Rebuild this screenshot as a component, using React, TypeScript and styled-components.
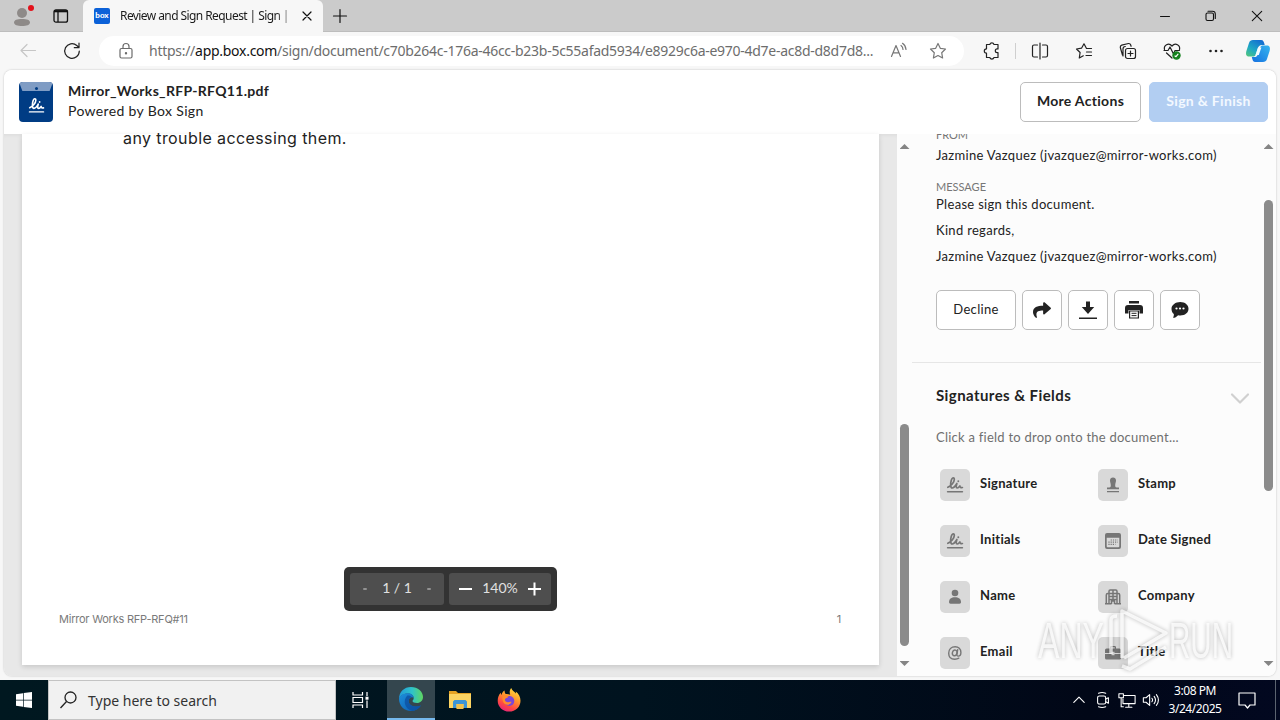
import React from "react";
import styled, { createGlobalStyle } from "styled-components";
import { FaShare } from "react-icons/fa";

const GlobalStyle = createGlobalStyle`
  * { box-sizing: border-box; }
  body { margin: 0; overflow: hidden; background: #f7f7f7; }
  h2, p { margin: 0; font-weight: 400; }
  button { padding: 0; margin: 0; font-family: inherit; }
  svg { display: block; flex: none; }
`;

type IconProps = { size?: number; color?: string; width?: number; children: React.ReactNode };

const Line = ({ size = 20, color = "#222", width = 1.2, children }: IconProps) => (
  <svg width={size} height={size} viewBox="0 0 20 20" fill="none" stroke={color} strokeWidth={width} strokeLinecap="round" strokeLinejoin="round">
    {children}
  </svg>
);

/* ---------------- browser icons ---------------- */

const ProfileIcon = () => (
  <svg width="24" height="24" viewBox="0 0 24 24">
    <circle cx="10" cy="9" r="5" fill="#8e8a88" />
    <path d="M2 18.500C2 16 5 15 10 15s8 1 8 3.500C18 21 14.500 22 10 22s-8-1-8-3.500z" fill="#8e8a88" />
    <circle cx="19" cy="4" r="3" fill="#e3121b" />
  </svg>
);

const CopilotIcon = () => (
  <svg width="26" height="24" viewBox="0 0 26 24">
    <defs>
      <linearGradient id="cpA" x1="0" y1="1" x2=".7" y2="0">
        <stop offset="0" stopColor="#56c878" />
        <stop offset=".45" stopColor="#1fa9c4" />
        <stop offset="1" stopColor="#146fd1" />
      </linearGradient>
      <linearGradient id="cpB" x1="1" y1="0" x2="0" y2="1">
        <stop offset="0" stopColor="#35b5ef" />
        <stop offset="1" stopColor="#1570e0" />
      </linearGradient>
    </defs>
    <path d="M8 1h8c2.500 0 3 2 3.700 5H17c-2.500 0-3.500 1.200-4.200 3.600L11 15c-.7 2-1.500 2.500-3.500 2.500H4C1 17.500.6 15 1.400 12L4 4c.8-2.200 2-3 4-3z" fill="url(#cpA)" />
    <path d="M18 23h-7.500c-2.500 0-3-2-3.700-5H9c2.500 0 3.500-1.200 4.200-3.600L15 9c.7-2 1.500-2.500 3.500-2.500H22c3 0 3.400 2.500 2.600 5.500L22 20c-.8 2.200-2 3-4 3z" fill="url(#cpB)" />
    <path d="M13 8.500h3.400l-2.600 7.500h-3.300z" fill="#f3fbff" />
  </svg>
);

const EdgeIcon = () => (
  <svg width="26" height="26" viewBox="0 0 26 26">
    <defs>
      <linearGradient id="edT" x1="0" y1=".5" x2="1" y2=".5">
        <stop offset="0" stopColor="#2199d8" />
        <stop offset=".55" stopColor="#2fc3c9" />
        <stop offset="1" stopColor="#5fd660" />
      </linearGradient>
      <linearGradient id="edB" x1="0" y1="0" x2="1" y2="1">
        <stop offset="0" stopColor="#1d8fdb" />
        <stop offset="1" stopColor="#0b59ad" />
      </linearGradient>
    </defs>
    <path d="M1 13C1 5.800 6.200 1 13 1c7 0 12 4.800 12 10 0 3.600-2.700 6-6 6-2.700 0-4.500-1-4.500-2 0-.7 1.200-1.200 1.200-3 0-2.700-2.600-4.600-5.900-4.600C5.300 7.400 2 9.800 1 13z" fill="url(#edT)" />
    <path d="M1 12.800C2 9.500 5.500 7.300 9.700 7.300c3.300 0 6 2 6 4.700-1-1.500-5-1-5 3 0 4 4.500 7 12.300 4.500C20.800 23 17.300 25 13 25 6 25 1 19.800 1 12.800z" fill="url(#edB)" />
    <path d="M9.300 9.500C7 12 6.300 15 7 18c.9 3.800 3.500 6.200 7.500 6.900 3.500-.4 6.500-2.300 8.500-5.400-7.800 2.500-12.300-.5-12.300-4.500 0-2.500 1.600-3.700 3-3.800-.8-1.200-2.400-1.900-4.400-1.700z" fill="#0c4fa0" opacity=".75" />
  </svg>
);

const FolderIcon = () => (
  <svg width="22" height="20" viewBox="0 0 22 20">
    <path d="M0 1h7l2 2h13v4H0z" fill="#e6a323" />
    <path d="M0 4h22v14H0z" fill="#fcd462" />
    <path d="M4 18v-6.500l1.500-1.500h11l1.500 1.500V18h-3.500v-4h-7v4z" fill="#3c95d6" />
    <path d="M7.500 14h7v5h-7z" fill="#f2c14c" />
  </svg>
);

const FirefoxIcon = () => (
  <svg width="24" height="24" viewBox="0 0 24 24">
    <defs>
      <linearGradient id="ff" x1=".8" y1="0" x2=".3" y2="1">
        <stop offset="0" stopColor="#ffe23f" />
        <stop offset=".4" stopColor="#ff9a2c" />
        <stop offset=".75" stopColor="#ff4743" />
        <stop offset="1" stopColor="#e6237a" />
      </linearGradient>
    </defs>
    <path d="M14.200 0c1 2.600 3 3.400 4.600 5.400.2-.7.1-1.300-.1-1.900 3 2.200 4.800 5.500 4.800 9.200C23.500 19 18.500 23.600 12.200 23.600 5.700 23.600.7 18.700.7 12.700c0-3.300 1.200-6.200 3-8 .1 1 .4 1.600.8 2.200C5.100 4.600 6.400 3 7.600 2.500c-.1 1.300.2 2.500 1 3.500 1.900-.2 3.400.1 4.600.9-.9-2.500-.6-5 1-6.900z" fill="url(#ff)" />
    <circle cx="12.300" cy="13" r="5" fill="#7a46d8" />
    <path d="M5.500 8c2-1 4.700-.6 6 .8-1 1.200-3.200 1-3.500 2.500-.3 1.800 1 3 3 3 1.500 0 2-.8 3.500-.5-.5 2-2.400 3-4.400 3C7 16.800 4.800 13 5.500 8z" fill="#ff8c2b" />
  </svg>
);

/* looped "l" and "i" mark used by the logo and both signing fields */
const Scribble = ({ size, color }: { size: number; color: string }) => (
  <svg width={size} height={size} viewBox="0 0 18 18" fill="none" stroke={color} strokeLinecap="round" strokeLinejoin="round">
    <path d="M1.800 11.300C5 10 8.300 6.300 8.300 3.500 8.300 1 6.100 1.300 5.300 4.200 4.500 7 4 12 6.300 12c1.800 0 3.200-2.200 4.600-4.500-.9 2.700-1 4.500.3 4.500 1.300 0 2-1 2.700-2 .2 1.500 1 1.800 2.500 1.500" strokeWidth="1.700" />
    <path d="M12.300 5.200v.1" strokeWidth="1.900" />
    <path d="M1.500 15.800h15" strokeWidth="1.400" />
  </svg>
);

/* ---------------- field icons ---------------- */

const G = "#767676";

const fieldIcons: Record<string, React.ReactNode> = {
  Signature: <Scribble size={18} color={G} />,
  Initials: <Scribble size={18} color={G} />,
  Stamp: (
    <svg width="14" height="16" viewBox="0 0 14 16" fill={G}>
      <path d="M4 3.500C4 1.500 5.200.5 7 .5s3 1 3 3C10 5.500 9.200 6 9.200 8.500c0 1.300.4 2 1.500 2H13v1.800H1v-1.800h2.300c1.100 0 1.500-.7 1.500-2C4.800 6 4 5.500 4 3.500zM1 14h12v1.200H1z" />
    </svg>
  ),
  "Date Signed": (
    <svg width="16" height="16" viewBox="0 0 16 16">
      <path fill={G} fillRule="evenodd" d="M2 0h12a2 2 0 0 1 2 2v12a2 2 0 0 1-2 2H2a2 2 0 0 1-2-2V2a2 2 0 0 1 2-2zm-.3 4.800v8.400q0 1.100 1.100 1.100h10.400q1.100 0 1.100-1.100V4.800z" />
      <path stroke={G} strokeWidth="1.200" strokeDasharray="1.200 1" d="M5.700 7h7M3.400 9.200h9.300M3.400 11.400h7" />
    </svg>
  ),
  Name: (
    <svg width="14" height="16" viewBox="0 0 14 16" fill={G}>
      <circle cx="7" cy="4" r="3.300" />
      <path d="M1 13c0-3.200 2.400-4.800 6-4.800s6 1.600 6 4.800c0 1-.5 1.700-1.500 1.700h-9C1.500 14.700 1 14 1 13z" />
    </svg>
  ),
  Company: (
    <svg width="16" height="16" viewBox="0 0 16 16" fill="none" stroke={G} strokeWidth="1.500">
      <path d="M4 15V2.200Q4 1 5.200 1h5.600Q12 1 12 2.200V15M3.500 4.500H2.800Q1.300 4.500 1.300 6v9M12.500 4.500h.7q1.500 0 1.500 1.500v9M0 14.700h6.500M9.500 14.700H16M6.500 15v-3h3v3M4 4.500h8M4 7.500h8M4 10.500h8M8 1v9.500" />
    </svg>
  ),
  Email: (
    <svg width="16" height="16" viewBox="0 0 16 16" fill="none" stroke={G} strokeWidth="1.400" strokeLinecap="round">
      <path d="M10.700 4.700l-.8 4.600c-.2 1.200.4 1.800 1.300 1.800 1.600 0 2.700-1.600 2.700-3.600C13.900 4 11.500 1.800 8.200 1.800 4.400 1.800 1.700 4.500 1.700 8.200c0 3.700 2.500 6 6.100 6 1.600 0 2.900-.3 4-1" />
      <ellipse cx="7.700" cy="7.900" rx="2.300" ry="2.900" transform="rotate(15 7.700 7.900)" />
    </svg>
  ),
  Title: (
    <svg width="16" height="14" viewBox="0 0 16 14" fill={G}>
      <path d="M5 2.500V1.300Q5 0 6.300 0h3.400Q11 0 11 1.300v1.200h3.500q1.500 0 1.500 1.500v3H9.500V5.800h-3V7H0V4q0-1.500 1.500-1.500zM6.300 2.500h3.400V1.200H6.300zM0 8h6.500v1.200h3V8H16v4q0 1.500-1.500 1.500h-13Q0 13.500 0 12z" />
    </svg>
  ),
};

const fields = ["Signature", "Stamp", "Initials", "Date Signed", "Name", "Company", "Email", "Title"];

/* ---------------- browser chrome ---------------- */

const Desktop = styled.div`
  display: flex;
  flex-direction: column;
  width: 1280px;
  height: 720px;
  position: relative;
  overflow: hidden;
  font-family: "Lato", sans-serif;
  color: #222;
`;

const TabStrip = styled.div`
  display: flex;
  height: 32px;
  background: #cbcbcb;
  border-bottom: 1px solid #bdbdbd;
`;

const StripCell = styled.div<{ $w: number }>`
  width: ${(p) => p.$w}px;
  height: 32px;
  display: flex;
  align-items: center;
  justify-content: center;
`;

const Tab = styled.div`
  width: 240px;
  height: 32px;
  display: flex;
  align-items: center;
  padding-left: 11px;
  background: #f7f7f7;
  border-radius: 6px 6px 0 0;
`;

const Favicon = styled.div`
  width: 16px;
  height: 16px;
  border-radius: 2px;
  background: #0b61d8;
  color: #fff;
  font: 900 8px/14px "Lato", sans-serif;
  text-align: center;
`;

const TabTitle = styled.div`
  width: 172px;
  margin-left: 10px;
  white-space: nowrap;
  font: 12px/20px "Noto Sans", sans-serif;
  letter-spacing: -0.58px;
  color: #1b1b1b;
  mask-image: linear-gradient(90deg, #000 155px, rgba(0, 0, 0, 0.35) 172px);
`;

const TabClose = styled.div`
  width: 20px;
  margin-left: 5px;
  display: flex;
  justify-content: center;
`;

const Spacer = styled.div`
  flex: 1;
`;

const Toolbar = styled.div`
  display: flex;
  align-items: center;
  height: 38px;
  padding: 0 2px 0 6px;
  background: #f7f7f7;
`;

const ToolCell = styled.div<{ $w?: number }>`
  flex: none;
  width: ${(p) => p.$w ?? 44}px;
  height: 30px;
  display: flex;
  align-items: center;
  justify-content: center;
`;

const AddressBar = styled.div`
  display: flex;
  align-items: center;
  flex: none;
  width: 865px;
  height: 30px;
  margin: 0 5px;
  padding: 0 16px 0 17px;
  background: #fff;
  border-radius: 15px;
`;

const Url = styled.div`
  width: 740px;
  flex: none;
  margin-left: 13px;
  white-space: nowrap;
  font: 14px/20px "Noto Sans", sans-serif;
  letter-spacing: -0.275px;
  color: #6d6d6d;

  b {
    font-weight: 400;
    color: #111;
  }
`;

const Separator = styled.div`
  width: 1px;
  height: 16px;
  margin: 0 2px 0 1px;
  background: #cfcfcf;
`;

/* ---------------- page ---------------- */

const Page = styled.div`
  display: flex;
  flex-direction: column;
  width: 1272px;
  height: 606px;
  margin: 0 4px;
  border-radius: 8px;
  overflow: hidden;
  background: #fcfcfc;
  box-shadow: 0 0 2px rgba(0, 0, 0, 0.25);
`;

const Header = styled.header`
  display: flex;
  align-items: center;
  height: 64px;
  padding: 0 8px 0 15px;
  background: #fff;
  flex: none;
`;

const Logo = styled.div`
  width: 34px;
  height: 40px;
  border-radius: 4px;
  overflow: hidden;
  background: #003c84;
`;

const LogoFlap = styled.div`
  width: 34px;
  height: 9px;
  padding-top: 5px;
  background: #7f9cc4;
  clip-path: polygon(0 0, 100% 0, 90% 100%, 10% 100%);

  &::after {
    content: "";
    display: block;
    width: 3px;
    height: 3px;
    margin: 0 auto;
    border-radius: 50%;
    background: #003c84;
  }
`;

const LogoMark = styled.div`
  display: flex;
  justify-content: center;
  padding-top: 6px;
`;

const DocTitle = styled.div`
  flex: 1;
  margin-left: 15px;
  padding-bottom: 2px;
  font-size: 14px;
  line-height: 20px;
  letter-spacing: 0.35px;

  b {
    display: block;
    font-weight: 700;
    letter-spacing: 0.3px;
  }
`;

const Button = styled.button<{ $w: number; $primary?: boolean; $bold?: boolean }>`
  display: flex;
  align-items: center;
  justify-content: center;
  width: ${(p) => p.$w}px;
  height: 40px;
  border: 1px solid ${(p) => (p.$primary ? "#b2cef2" : "#bcbcbc")};
  border-radius: 5px;
  background: ${(p) => (p.$primary ? "#b2cef2" : "#fff")};
  color: ${(p) => (p.$primary ? "#f3f8ff" : "#222")};
  font-size: ${(p) => (p.$bold ? 14 : 13)}px;
  font-weight: ${(p) => (p.$bold ? 700 : 400)};
  letter-spacing: 0.3px;

  span {
    padding-bottom: 3px;
  }
`;

const HeaderButtons = styled.div`
  display: flex;
  gap: 8px;
`;

const Body = styled.div`
  display: flex;
  height: 542px;
`;

const DocPane = styled.div`
  width: 893px;
  padding: 0 18px 11px;
  background: #e8e8e8;
  box-shadow: inset 0 4px 4px -3px rgba(0, 0, 0, 0.06);
`;

const Sheet = styled.div`
  display: flex;
  flex-direction: column;
  justify-content: space-between;
  height: 531px;
  padding: 0 38px 36px 37px;
  background: #fff;
  box-shadow: 0 2px 5px rgba(0, 0, 0, 0.14);
`;

const DocText = styled.p`
  margin: -7px 0 0 64px;
  font: 16px/22px "Inter", sans-serif;
  letter-spacing: 0.4px;
  color: #222;
`;

const DocFooter = styled.div`
  display: flex;
  justify-content: space-between;
  font: 11px/20px "Inter", sans-serif;
  letter-spacing: -0.22px;
  color: #7a7a7a;
`;

const ScrollTrack = styled.div`
  display: flex;
  flex-direction: column;
  align-items: center;
  width: 15px;
  height: 542px;
  padding: 10px 0 10px;
  background: #fcfcfc;
`;

const Arrow = styled.div<{ $down?: boolean }>`
  width: 10px;
  height: 5px;
  background: #858585;
  clip-path: ${(p) => (p.$down ? "polygon(0 0, 100% 0, 50% 100%)" : "polygon(0 100%, 100% 100%, 50% 0)")};
`;

const Thumb = styled.div<{ $top: number; $h: number }>`
  width: 9px;
  height: ${(p) => p.$h}px;
  margin: ${(p) => p.$top}px 0 auto;
  border-radius: 5px;
  background: #8b8b8b;
`;

const Sidebar = styled.aside`
  width: 349px;
  height: 542px;
  overflow: hidden;
  background: #fcfcfc;
`;

const Details = styled.section`
  height: 235px;
  margin-top: -6px;
  padding-left: 24px;
  font-size: 13px;
  line-height: 20px;
  letter-spacing: 0.31px;
  border-bottom: 1px solid #e6e6e6;
`;

const Caption = styled.div<{ $mt?: number }>`
  margin-top: ${(p) => p.$mt ?? 0}px;
  font-size: 11px;
  line-height: 14px;
  letter-spacing: 0;
  color: #767676;
`;

const Para = styled.p<{ $mt?: number }>`
  margin-top: ${(p) => p.$mt ?? 0}px;
`;

const Actions = styled.div`
  display: flex;
  gap: 6px;
  margin-top: 24px;
`;

const FieldsHead = styled.div`
  display: flex;
  align-items: center;
  justify-content: space-between;
  margin-top: 21px;
  padding: 0 11px 0 24px;

  h2 {
    padding-bottom: 2px;
    font-size: 15px;
    line-height: 22px;
    font-weight: 700;
    letter-spacing: 0.42px;
  }
`;

const Hint = styled.p`
  margin: 19px 0 0 24px;
  font-size: 13px;
  line-height: 20px;
  letter-spacing: 0.24px;
  color: #6f6f6f;
`;

const FieldGrid = styled.div`
  display: grid;
  grid-template-columns: 158px 158px;
  row-gap: 24px;
  margin: 22px 0 0 28px;
`;

const Field = styled.div`
  display: flex;
  gap: 10px;
  height: 32px;
  font-size: 13px;
  font-weight: 700;
  line-height: 29px;
  letter-spacing: 0.29px;
`;

const FieldIcon = styled.div`
  display: flex;
  align-items: center;
  justify-content: center;
  width: 30px;
  height: 32px;
  border-radius: 5px;
  background: #d9d9d9;
`;

/* ---------------- overlays ---------------- */

const Controls = styled.div`
  position: absolute;
  left: 344px;
  top: 567px;
  display: flex;
  gap: 5px;
  width: 213px;
  height: 44px;
  padding: 6px;
  border-radius: 5px;
  background: #333;
`;

const ControlGroup = styled.div<{ $w: number }>`
  display: flex;
  align-items: center;
  justify-content: space-between;
  width: ${(p) => p.$w}px;
  height: 32px;
  padding: 0 10px;
  border-radius: 3px;
  background: #4e4e4e;
  color: #e0e0e0;
  font-size: 14px;
  line-height: 28px;

  span {
    padding-bottom: 3px;
  }
`;

const Dot = styled.i`
  width: 4px;
  height: 2px;
  margin: 0 3px;
  border-radius: 1px;
  background: #929292;
`;

const Watermark = styled.div`
  position: absolute;
  left: 1034px;
  top: 606px;
  filter: drop-shadow(0 0 2px rgba(0, 0, 0, 0.38));
  opacity: 0.85;

  svg {
    overflow: visible;
  }
`;

/* ---------------- taskbar ---------------- */

const Taskbar = styled.div`
  display: flex;
  height: 40px;
  margin-top: 4px;
  background: linear-gradient(90deg, #001820 0%, #00131f 50%, #010717 85%, #020820 100%);
`;

const TaskCell = styled.div<{ $w: number; $active?: boolean }>`
  display: flex;
  align-items: center;
  justify-content: center;
  width: ${(p) => p.$w}px;
  height: 40px;
  background: ${(p) => (p.$active ? "#34464e" : "transparent")};
  border-bottom: ${(p) => (p.$active ? "2px solid #76b9ed" : "0")};
`;

const Search = styled.div`
  display: flex;
  align-items: center;
  width: 288px;
  padding-left: 11px;
  gap: 11px;
  background: #f1f1f1;
  border: 1px solid #c3c3c3;
  font: 14px/20px "Noto Sans", sans-serif;
  color: #333;

  span {
    padding-top: 1px;
  }
`;

const Clock = styled.div`
  width: 60px;
  text-align: center;
  font: 12px/18px "Noto Sans", sans-serif;
  letter-spacing: -0.45px;
  color: #fff;
  padding-top: 2px;
`;

const ShowDesktop = styled.div`
  width: 5px;
  margin-left: 6px;
  border-left: 1px solid #5b6370;
`;

const App = () => {
  return (
    <Desktop>
      <GlobalStyle />

      <TabStrip>
        <StripCell $w={48}><ProfileIcon /></StripCell>
        <StripCell $w={25}>
          <svg width="16" height="14" viewBox="0 0 16 14" fill="none" stroke="#111" strokeWidth="1.300">
            <rect x="1" y=".8" width="13.500" height="12.400" rx="2" />
            <path d="M1 2.200h13.500" strokeWidth="2.200" />
            <path d="M5 3v10" />
          </svg>
        </StripCell>
        <StripCell $w={10} />
        <Tab>
          <Favicon>box</Favicon>
          <TabTitle>Review and Sign Request | Sign |</TabTitle>
          <TabClose>
            <Line size={16} width={1.500} color="#111"><path d="M5 5l10 10M15 5L5 15" /></Line>
          </TabClose>
        </Tab>
        <StripCell $w={34}>
          <Line size={20} width={1.200} color="#111"><path d="M10 3.500v13M3.500 10h13" /></Line>
        </StripCell>
        <Spacer />
        <StripCell $w={46}><Line size={20} width={1} color="#111"><path d="M5.500 10.500h9" /></Line></StripCell>
        <StripCell $w={46}>
          <Line size={20} width={1.100} color="#111">
            <rect x="5" y="7" width="7.500" height="7.500" rx="1.500" />
            <path d="M7 5.200h4.500q2.800 0 2.800 2.800v4.500" />
          </Line>
        </StripCell>
        <StripCell $w={46}><Line size={20} width={1.100} color="#111"><path d="M5.300 5.300l9.400 9.400M14.700 5.300l-9.400 9.400" /></Line></StripCell>
      </TabStrip>

      <Toolbar>
        <ToolCell><Line color="#c6c6c6"><path d="M17.500 9.500H3M9 3.500L3 9.500l6 6" /></Line></ToolCell>
        <ToolCell>
          <Line><path d="M17.300 10a7.300 7.300 0 1 1-2.500-5.500L17 6.500M17 2v4.700h-4.700" /></Line>
        </ToolCell>
        <AddressBar>
          <Line color="#6b6b6b">
            <rect x="4" y="7.500" width="12" height="9.500" rx="1.500" />
            <path d="M7 7.500V5.500a3 3 0 0 1 6 0v2" />
            <circle cx="10" cy="12.300" r=".6" fill="#6b6b6b" />
          </Line>
          <Url>
            https://<b>app.box.com</b>/sign/document/c70b264c-176a-46cc-b23b-5c55afad5934/e8929c6a-e970-4d7e-ac8d-d8d7d8...
          </Url>
          <Line color="#777">
            <path d="M2.500 15.500L7 4.500l4.500 11M4 11.800h6M12 4.500q2 1.500 2 4M13.500 2.300q3.200 2.200 3.500 6.200" />
          </Line>
          <ToolCell $w={19} />
          <Line color="#777">
            <path d="M10 2.500l2.300 4.800 5.200.7-3.800 3.700.9 5.300L10 14.500 5.400 17l.9-5.300L2.500 8l5.200-.7z" />
          </Line>
        </AddressBar>
        <ToolCell $w={45}>
          <Line>
            <path d="M4.500 3.500h3.300a2.200 2.200 0 0 1 4.200 0h4v4.400h-.8a1.900 1.900 0 0 0 0 3.800h.8v4.800h-4a2.200 2.200 0 0 1-4.200 0H4.500v-4.300a2.200 2.200 0 0 1 0-4.400z" />
          </Line>
        </ToolCell>
        <Separator />
        <ToolCell $w={43}>
          <Line><path d="M10 2v16M7.500 4H4Q2.500 4 2.500 5.500v9Q2.500 16 4 16h3.500M12.500 4H16q1.500 0 1.500 1.500v9q0 1.500-1.500 1.500h-3.500" /></Line>
        </ToolCell>
        <ToolCell $w={45}>
          <Line><path d="M17.500 7.500h-5L10 2.800 7.500 7.200l-5 .8 3.600 3.500L5.300 17l4-2.200M12.500 11h5M12 14.500h5.500" /></Line>
        </ToolCell>
        <ToolCell>
          <Line>
            <rect x="7.500" y="7.500" width="10" height="10" rx="2" />
            <path d="M12.500 10v5M10 12.500h5M4.500 14L2.300 6.500Q2 4.700 3.700 4.100L10.500 2.500q1.700-.2 2.200 1.500l.4 1.300M7.300 5.500Q5 5.500 5 8v7" />
          </Line>
        </ToolCell>
        <ToolCell>
          <Line>
            <path d="M2.500 8.500C1.500 4.500 6.500.8 10 5c3.500-4.200 8.500-.5 7.500 3.500M4.500 12l5.500 5M2 9.500h4L8 6l3.500 7L13 9.500h4.500" />
            <circle cx="14.500" cy="14.500" r="3.600" fill="#13801c" stroke="#13801c" />
            <path d="M13 15l1 .7 2-2.500" stroke="#fff" />
          </Line>
        </ToolCell>
        <ToolCell>
          <svg width="20" height="20" viewBox="0 0 20 20" fill="#222">
            <circle cx="4.500" cy="10" r="1.300" /><circle cx="10" cy="10" r="1.300" /><circle cx="15.500" cy="10" r="1.300" />
          </svg>
        </ToolCell>
        <ToolCell $w={40}><CopilotIcon /></ToolCell>
      </Toolbar>

      <Page>
        <Header>
          <Logo>
            <LogoFlap />
            <LogoMark><Scribble size={17} color="#fff" /></LogoMark>
          </Logo>
          <DocTitle>
            <b>Mirror_Works_RFP-RFQ11.pdf</b>
            Powered by Box Sign
          </DocTitle>
          <HeaderButtons>
            <Button $w={121} $bold><span>More Actions</span></Button>
            <Button $w={119} $bold $primary><span>Sign &amp; Finish</span></Button>
          </HeaderButtons>
        </Header>

        <Body>
          <DocPane>
            <Sheet>
              <DocText>any trouble accessing them.</DocText>
              <DocFooter>
                <span>Mirror Works RFP-RFQ#11</span>
                <span>1</span>
              </DocFooter>
            </Sheet>
          </DocPane>
          <ScrollTrack>
            <Arrow />
            <Thumb $top={275} $h={222} />
            <Arrow $down />
          </ScrollTrack>

          <Sidebar>
            <Details>
              <Caption>FROM</Caption>
              <Para $mt={3}>Jazmine Vazquez (jvazquez@mirror-works.com)</Para>
              <Caption $mt={15}>MESSAGE</Caption>
              <Para>Please sign this document.</Para>
              <Para $mt={6}>Kind regards,</Para>
              <Para $mt={6}>Jazmine Vazquez (jvazquez@mirror-works.com)</Para>
              <Actions>
                <Button $w={80}><span>Decline</span></Button>
                <Button $w={40}><FaShare size={18} color="#222" /></Button>
                <Button $w={40}>
                  <svg width="18" height="20" viewBox="0 0 18 20" fill="#222">
                    <path d="M7 1.500h4V7h4.200L9 14 2.800 7H7zM0 17.500h18v1.500H0z" />
                  </svg>
                </Button>
                <Button $w={40}>
                  <svg width="18" height="18" viewBox="0 0 18 18">
                    <path d="M4 0h10v2.500H4zM3 4h12a3 3 0 0 1 3 3v5.500h-3.500V9h-11v3.500H0V7a3 3 0 0 1 3-3z" fill="#222" />
                    <path d="M4.600 10h8.800v7H4.600z" fill="#fff" stroke="#222" strokeWidth="1.200" />
                    <path d="M6.500 12.300h5M6.500 14.600h5" stroke="#222" />
                  </svg>
                </Button>
                <Button $w={40}>
                  <svg width="18" height="18" viewBox="0 0 18 18">
                    <path d="M9.300 1C14 1 17.500 3.800 17.500 7.800S14 14.500 9.300 14.500c-.8 0-1.500 0-2.200-.3C5.500 16 3.500 17 2 16.800c.8-1.200 1-2.600.8-3.700C1.200 11.800.5 9.900.5 7.800.5 3.800 4.600 1 9.300 1z" fill="#222" />
                    <circle cx="5.500" cy="7.500" r="1.100" fill="#fff" /><circle cx="9" cy="7.500" r="1.100" fill="#fff" /><circle cx="12.500" cy="7.500" r="1.100" fill="#fff" />
                  </svg>
                </Button>
              </Actions>
            </Details>

            <FieldsHead>
              <h2>Signatures &amp; Fields</h2>
              <Line color="#d0d0d0" width={2.200}><path d="M2 8.500l8 8 8-8" /></Line>
            </FieldsHead>
            <Hint>Click a field to drop onto the document...</Hint>
            <FieldGrid>
              {fields.map((name) => (
                <Field key={name}>
                  <FieldIcon>{fieldIcons[name]}</FieldIcon>
                  {name}
                </Field>
              ))}
            </FieldGrid>
          </Sidebar>
          <ScrollTrack>
            <Arrow />
            <Thumb $top={51} $h={291} />
            <Arrow $down />
          </ScrollTrack>
        </Body>
      </Page>

      <Taskbar>
        <TaskCell $w={48}>
          <svg width="16" height="16" viewBox="0 0 16 16" fill="#fff">
            <path d="M0 2.200l7-1v6.500H0zM7.700 1.100L16 0v7.700H7.700zM0 8.400h7v6.400l-7-1zM7.700 8.400H16V16l-8.300-1.100z" />
          </svg>
        </TaskCell>
        <Search>
          <svg width="17" height="18" viewBox="0 0 17 18" fill="none" stroke="#222" strokeWidth="1.300">
            <circle cx="10.500" cy="6.500" r="5.500" />
            <path d="M6.500 10.500L.5 17" />
          </svg>
          <span>Type here to search</span>
        </Search>
        <TaskCell $w={49}>
          <svg width="18" height="18" viewBox="0 0 18 18" fill="none" stroke="#fff" strokeWidth="1.200">
            <path d="M1 1v3h9.500V1M1 17v-3h9.500v3M1 6.500h9.500v5H1zM15 1v4M15 9.500V17" />
            <path d="M13.500 7.200h3" strokeWidth="3" />
          </svg>
        </TaskCell>
        <TaskCell $w={2} />
        <TaskCell $w={48} $active><EdgeIcon /></TaskCell>
        <TaskCell $w={49}><FolderIcon /></TaskCell>
        <TaskCell $w={49}><FirefoxIcon /></TaskCell>
        <Spacer />
        <TaskCell $w={24}><Line size={16} color="#fff" width={1.400}><path d="M3.500 13L10 6.500l6.500 6.500" /></Line></TaskCell>
        <TaskCell $w={24}>
          <Line size={18} color="#fff" width={1.200}>
            <rect x="4" y="5.500" width="9" height="9" rx="2" />
            <path d="M13 9l3-1.500v6L13 12M5 2.500q4-1.600 8 0M5 17.500q4 1.600 8 0" />
          </Line>
        </TaskCell>
        <TaskCell $w={24}>
          <Line size={18} color="#fff" width={1.200}>
            <path d="M7 5h12v9H5.500V9M12 14v4M8.500 18h7M1 3h5v4.500H1zM3.500 7.500v10H6" />
          </Line>
        </TaskCell>
        <TaskCell $w={24}>
          <Line size={18} color="#fff" width={1.200}>
            <path d="M1.500 7.500h3L8.500 4v12l-4-3.500h-3zM11 8q1.500 2 0 4M13.500 6q3 4 0 8M16 4q4.500 6 0 12" />
          </Line>
        </TaskCell>
        <TaskCell $w={2} />
        <Clock>
          3:08 PM<br />3/24/2025
        </Clock>
        <TaskCell $w={44}>
          <Line size={20} color="#fff" width={1.200}><path d="M2 3h16v12h-5l-2.500 3L8 15H2z" /></Line>
        </TaskCell>
        <ShowDesktop />
      </Taskbar>

      <Controls>
        <ControlGroup $w={94}>
          <Dot />
          <span>1 / 1</span>
          <Dot />
        </ControlGroup>
        <ControlGroup $w={102}>
          <svg width="13" height="14" viewBox="0 0 13 14" stroke="#fff" strokeWidth="2"><path d="M0 7h13" /></svg>
          <span>140%</span>
          <svg width="13" height="14" viewBox="0 0 13 14" stroke="#fff" strokeWidth="2"><path d="M0 7h13M6.500 .5v13" /></svg>
        </ControlGroup>
      </Controls>

      <Watermark>
        <svg width="204" height="70" viewBox="0 0 204 70">
          <g fill="#fff" fillOpacity=".8" fontFamily="Liberation Sans" fontSize="50">
            <text x="4" y="52" textLength="66" lengthAdjust="spacingAndGlyphs">ANY</text>
            <text x="135" y="52" textLength="64" lengthAdjust="spacingAndGlyphs">RUN</text>
          </g>
          <path d="M77 48V14q0-4 6-4M88 52V5l44 22-42 25M88 60l8 3 36-22" fill="none" stroke="#fff" strokeOpacity=".8" strokeWidth="3.500" strokeLinejoin="round" />
        </svg>
      </Watermark>
    </Desktop>
  );
};

export default App;
